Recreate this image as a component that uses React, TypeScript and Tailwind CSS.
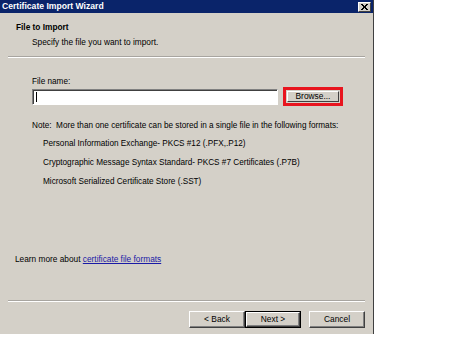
import React from "react";

const font = { fontFamily: '"Liberation Sans", Arial, sans-serif' };

const ClassicButton = ({ label, isDefault }: { label: string; isDefault?: boolean }) => (
  <div className={`w-[56px] h-[17px] ${isDefault ? "border border-black" : ""}`}>
    <div className="w-full h-full flex items-center justify-center bg-[#d4d0c8] border-t border-l border-white border-b border-r border-b-[#404040] border-r-[#404040] shadow-[inset_-1px_-1px_0_#808080] text-[8.4px] text-black leading-none">
      {label}
    </div>
  </div>
);

const Separator = () => (
  <div className="mx-2 w-[357px]">
    <div className="h-px bg-[#a8a5a0]" />
    <div className="h-px bg-white" />
  </div>
);

export default function App() {
  return (
    <div className="w-[451px] h-[351px] bg-white overflow-hidden" style={font}>
      <div className="w-[374px] h-[334px] bg-[#d4d0c8] border-r border-r-[#404040] flex flex-col">
        {/* Title bar */}
        <div className="h-[13px] bg-[#0a246a] flex items-center justify-between pl-[2px] pr-[2px]">
          <span className="text-white font-bold text-[8.6px] leading-[13px]">
            Certificate Import Wizard
          </span>
          <div className="w-[13px] h-[10px] bg-[#d4d0c8] border-t border-l border-white border-b border-r border-b-[#404040] border-r-[#404040] flex items-center justify-center">
            <svg width="7" height="6" viewBox="0 0 7 6">
              <path d="M0 0L6 6M1 0L7 6M6 0L0 6M7 0L1 6" stroke="black" strokeWidth="1" />
            </svg>
          </div>
        </div>

        {/* Header */}
        <div className="pl-4 pt-[8px] h-[43px] text-[8.3px] leading-[13px] text-black">
          <div className="font-bold">File to Import</div>
          <div className="pl-4 mt-[2px]">Specify the file you want to import.</div>
        </div>
        <Separator />

        {/* Body */}
        <div className="pl-8 pt-[17px] text-[8.2px] leading-[13px] text-black">
          <div>File name:</div>
          <div className="flex items-center mt-[-1px] gap-[5px]">
            <div className="w-[246px] h-[16px] bg-white border-t border-l border-[#808080] border-b border-r border-b-white border-r-white shadow-[inset_1px_1px_0_#404040] flex items-center pl-[3px]">
              <div className="w-px h-[10px] bg-black" />
            </div>
            <div className="w-[60px] h-[19px] border-[3px] border-[#e8141e] p-[1px]">
              <div className="w-full h-full flex items-center justify-center bg-[#d4d0c8] border-t border-l border-white border-b border-r border-b-[#404040] border-r-[#404040] text-[8.4px] leading-none">
                Browse...
              </div>
            </div>
          </div>

          <div className="mt-[13px] whitespace-nowrap">
            Note:&nbsp; More than one certificate can be stored in a single file in the following formats:
          </div>
          <div className="pl-[11px] mt-[5px] flex flex-col gap-[6px] whitespace-nowrap">
            <div>Personal Information Exchange- PKCS #12 (.PFX,.P12)</div>
            <div>Cryptographic Message Syntax Standard- PKCS #7 Certificates (.P7B)</div>
            <div>Microsoft Serialized Certificate Store (.SST)</div>
          </div>
        </div>

        <div className="flex-1" />

        <div className="pl-[15px] text-[8.3px] leading-[13px] text-black">
          Learn more about{" "}
          <span className="text-[#1a1aa6] underline">certificate file formats</span>
        </div>

        <div className="h-[34px]" />
        <Separator />

        {/* Footer buttons */}
        <div className="flex justify-end pr-[8px] pt-[9px] pb-[6px]">
          <ClassicButton label="< Back" />
          <ClassicButton label="Next >" isDefault />
          <div className="w-[8px]" />
          <ClassicButton label="Cancel" />
        </div>
      </div>
    </div>
  );
}
